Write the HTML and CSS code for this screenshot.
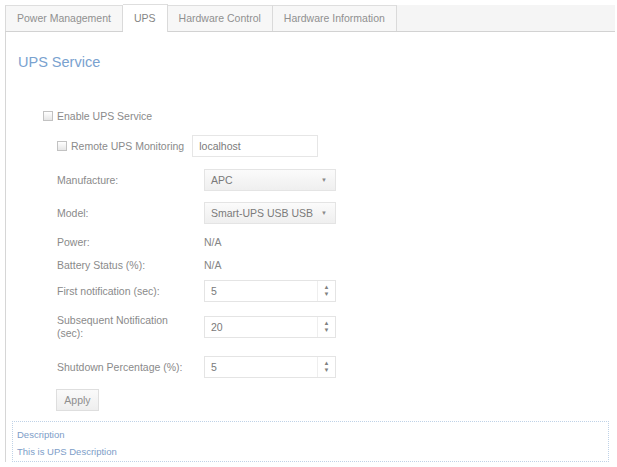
FILE: index.html
```html
<!DOCTYPE html>
<html>
    <head>
        <meta charset="UTF-8" />
        <meta name="viewport" content="width=device-width, initial-scale=1.0"/>
        <link rel="stylesheet" href="styles.css">
    </head>
    <body>
        <div class="page">
            <div class="tabs">
                <div class="tab">Power Management</div>
                <div class="tab active">UPS</div>
                <div class="tab">Hardware Control</div>
                <div class="tab">Hardware Information</div>
            </div>
            <div class="panel">
                <h2 class="title">UPS Service</h2>
                <div class="check enable"><span class="box"></span>Enable UPS Service</div>
                <div class="check remote"><span class="box"></span>Remote UPS Monitoring<span class="text">localhost</span></div>
                <div class="form">
                    <div class="row r-manu"><span class="label">Manufacture:</span><span class="select">APC<i>&#9660;</i></span></div>
                    <div class="row r-model"><span class="label">Model:</span><span class="select">Smart-UPS USB USB<i>&#9660;</i></span></div>
                    <div class="row r-power"><span class="label">Power:</span><span class="value">N/A</span></div>
                    <div class="row r-batt"><span class="label">Battery Status (%):</span><span class="value">N/A</span></div>
                    <div class="row r-first"><span class="label">First notification (sec):</span><span class="number">5<b><i>&#9650;</i><i>&#9660;</i></b></span></div>
                    <div class="row r-sub"><span class="label">Subsequent Notification<br>(sec):</span><span class="number">20<b><i>&#9650;</i><i>&#9660;</i></b></span></div>
                    <div class="row r-shut"><span class="label">Shutdown Percentage (%):</span><span class="number">5<b><i>&#9650;</i><i>&#9660;</i></b></span></div>
                    <div class="row r-apply"><span class="button">Apply</span></div>
                </div>
                <div class="desc">
                    <div class="desc-title">Description</div>
                    <div class="desc-text">This is UPS Description</div>
                </div>
            </div>
        </div>
    </body>
</html>
```

FILE: styles.css
```css
body {
    margin: 0;
    background: #fff;
    font-family: "Liberation Sans", Arial, sans-serif;
    font-size: 10.5px;
    color: #8a8a8a;
}
.page {
    padding: 5px 2px 0 5px;
    height: 462px;
    box-sizing: border-box;
}
.tabs {
    display: flex;
    height: 26px;
    background: #f5f5f5;
    border-bottom: 1px solid #d2d2d2;
}
.tab {
    padding: 0 11px;
    line-height: 25px;
    border-right: 1px solid #dadada;
    border-top: 1px solid #dedede;
    background: #f7f7f7;
    color: #909090;
}
.tab:first-child {
    border-left: 1px solid #dadada;
}
.tab.active {
    background: #fff;
    margin-top: -1px;
    height: 27px;
    line-height: 27px;
    color: #858585;
}
.panel {
    border-left: 1px solid #d6d6d6;
    height: 430px;
    padding: 0 6px 0 6px;
}
.title {
    margin: 0;
    padding: 22px 0 0 6px;
    font-size: 14.5px;
    font-weight: normal;
    color: #7aa2cf;
    height: 48px;
    box-sizing: border-box;
}
.check {
    display: flex;
    align-items: center;
}
.box {
    width: 8px;
    height: 8px;
    border: 1px solid #c2c2c2;
    background: linear-gradient(#fff, #e6e6e6);
    margin-right: 4px;
}
.enable {
    margin: 29px 0 0 31px;
    height: 14px;
}
.remote {
    margin: 12px 0 0 45px;
    height: 21px;
}
.text {
    margin-left: 8px;
    width: 118px;
    height: 20px;
    line-height: 20px;
    padding-left: 6px;
    border: 1px solid #e6e6e6;
    color: #7a7a7a;
}
.form {
    margin-left: 45px;
}
.row {
    display: flex;
    align-items: center;
}
.label {
    width: 147px;
    flex: none;
    line-height: 13px;
}
.select, .number {
    position: relative;
    width: 124px;
    height: 20px;
    line-height: 20px;
    padding-left: 6px;
    border: 1px solid #e4e4e4;
    color: #7a7a7a;
}
.select {
    background: linear-gradient(#fbfbfb, #efefef);
}
.select i {
    position: absolute;
    right: 8px;
    top: 0;
    font-style: normal;
    font-size: 6px;
    color: #8a8a8a;
}
.number b {
    position: absolute;
    right: 0;
    top: 0;
    bottom: 0;
    width: 17px;
    border-left: 1px solid #eeeeee;
    display: flex;
    flex-direction: column;
    justify-content: center;
    align-items: center;
}
.number i {
    font-style: normal;
    font-size: 6px;
    line-height: 7px;
    color: #808080;
}
.value {
    color: #858585;
}
.r-manu { margin-top: 13px; }
.r-model { margin-top: 11px; }
.r-power { margin-top: 11px; height: 14px; }
.r-batt { margin-top: 9px; height: 14px; }
.r-first { margin-top: 8px; }
.r-sub { margin-top: 12px; }
.r-shut { margin-top: 16px; }
.r-apply { margin-top: 11px; }
.button {
    margin-left: -1px;
    width: 41px;
    height: 20px;
    line-height: 20px;
    text-align: center;
    border: 1px solid #dedede;
    background: linear-gradient(#fafafa, #eeeeee);
    color: #8e8e8e;
}
.desc {
    margin-top: 10px;
    border: 1px dotted #bfd2e7;
    height: 41px;
    padding: 4px 4px 0;
    box-sizing: border-box;
    color: #7d9dc8;
    font-size: 9.5px;
    line-height: 17px;
}
```
